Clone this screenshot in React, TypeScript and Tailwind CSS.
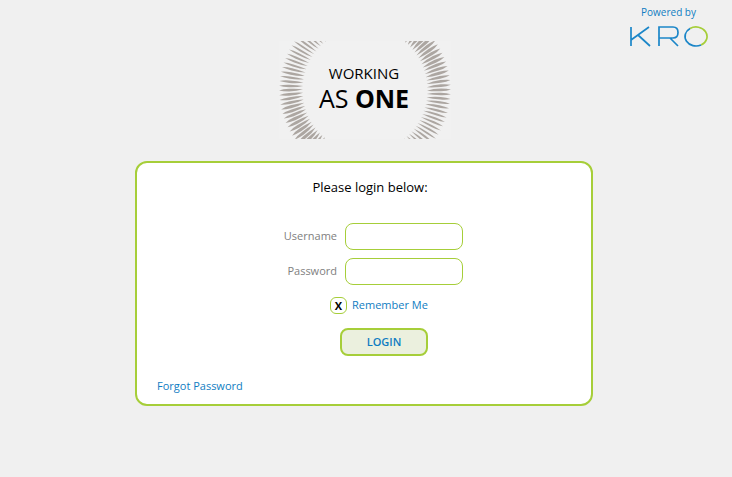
import { useState } from "react";

const SPOKES = 114;

function Spokes() {
  const items = [];
  for (let i = 0; i < SPOKES; i++) {
    const deg = (i * 360) / SPOKES;
    const rad = (deg * Math.PI) / 180;
    // Spokes are heavier towards the top right and the bottom left.
    const heavy = -Math.sin(2 * rad);
    const w = 1.45 + 0.35 * heavy;
    items.push(
      <path
        key={i}
        d={`M62 ${0.5 * w} Q68 ${-w * 0.9} 76 ${-w} Q82 ${-w} 86 ${-0.4 * w} Q82 ${w * 0.7} 76 ${w * 0.8} Q68 ${w} 62 ${0.5 * w}Z`}
        transform={`rotate(${deg})`}
      />
    );
  }
  return <>{items}</>;
}

function WorkingAsOne() {
  return (
    <svg width="172" height="98" viewBox="-86 -49 172 98" role="img" aria-label="Working as one" className="block">
      <rect x="-86" y="-49" width="172" height="98" fill="#f1f1f1" />
      <g fill="#aca6a1">
        <Spokes />
      </g>
      <g className="font-['Open_Sans','Noto_Sans',sans-serif]" textAnchor="middle" fill="#000">
        <text x="-1" y="-11" fontSize="15">WORKING</text>
        <text x="-1" y="18" fontSize="25">
          AS <tspan fontWeight="700">ONE</tspan>
        </text>
      </g>
    </svg>
  );
}

function KroLogo() {
  return (
    <svg width="78" height="22" viewBox="0 0 78 22" fill="none" strokeWidth="1.7" aria-label="KRO" role="img" className="block">
      <g stroke="#1b86c8">
        <path d="M1 1V20M19 1L1 14M8 9L20 20" />
        <path d="M29 20V1H43Q48 1 48 6.500Q48 12 43 12H29M40 12L48 20" />
      </g>
      <path d="M60 2.540A11 9.500 0 1 1 71 18.960" stroke="#a6ce39" />
      <path d="M60 2.540A11 9.500 0 0 0 71 18.960" stroke="#1b86c8" />
    </svg>
  );
}

const field = "h-[27px] w-[118px] rounded-lg border border-[#a6ce39] bg-white px-2 outline-none";

export default function App() {
  const [remember, setRemember] = useState(true);
  return (
    <div className="min-h-screen bg-[#f0f0f0] font-['Open_Sans','Noto_Sans',sans-serif] text-[11px]">
      <header className="grid grid-cols-[1fr_auto_1fr] items-start pr-0.5">
        <div />
        <div className="pt-[41px]">
          <WorkingAsOne />
        </div>
        <div className="flex flex-col items-end gap-1.5 pr-[22px] pt-1">
          <div className="pr-3 text-[10px] leading-4 text-[#0f7dc2]">Powered by</div>
          <KroLogo />
        </div>
      </header>
      <main className="pl-[135px] pr-[139px] pt-[22px]">
        <form
          onSubmit={(e) => e.preventDefault()}
          className="flex flex-col rounded-xl border-2 border-[#a6ce39] bg-white px-5 pb-2.5 pt-3.5"
        >
          <h1 className="pl-3 text-center text-[13px] leading-5 text-black">Please login below:</h1>
          <div className="mt-[26px] grid grid-cols-[180px_118px] items-center gap-x-2 gap-y-2 text-[#808080]">
            <label htmlFor="user" className="text-right">Username</label>
            <input id="user" type="text" className={field} />
            <label htmlFor="pass" className="text-right">Password</label>
            <input id="pass" type="password" className={field} />
          </div>
          <label className="mt-3 ml-[173px] flex h-[17px] items-center gap-[5px] self-start text-[#0f7dc2]">
            <span className="grid size-[17px] place-items-center">
              <input
                type="checkbox"
                checked={remember}
                onChange={(e) => setRemember(e.target.checked)}
                className="peer col-start-1 row-start-1 size-[17px] appearance-none rounded-md border border-[#a6ce39] bg-white"
              />
              <span className="pointer-events-none invisible col-start-1 row-start-1 leading-4 font-bold text-black peer-checked:visible">
                X
              </span>
            </span>
            Remember Me
          </label>
          <button className="mt-3.5 ml-[183px] h-7 w-[88px] rounded-lg border-2 border-[#a6ce39] bg-[#ebf0de] font-semibold text-[#0f7dc2]">
            LOGIN
          </button>
          <a href="#forgot" className="mt-[22px] self-start leading-4 text-[#0f7dc2]">Forgot Password</a>
        </form>
      </main>
    </div>
  );
}
